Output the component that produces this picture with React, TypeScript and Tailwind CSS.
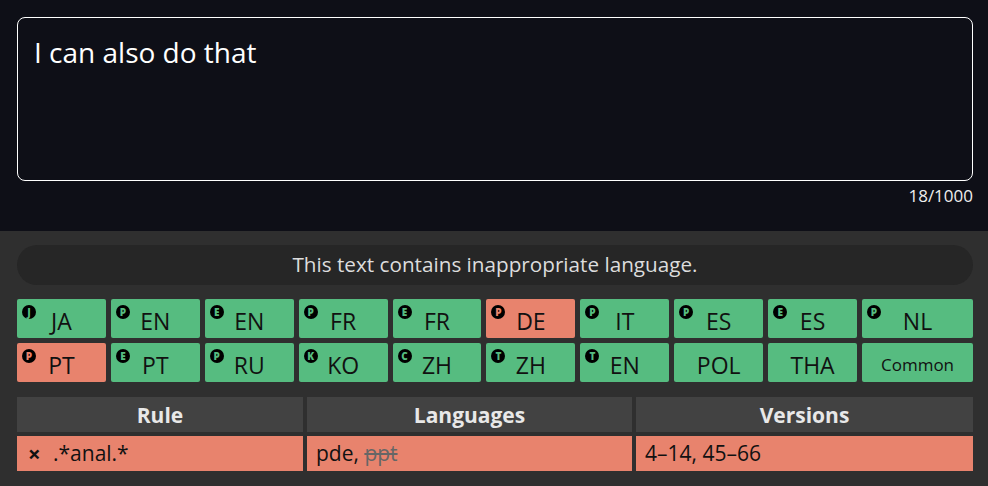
import React from "react";

type Cell = { badge?: string; label: string; bad?: boolean; small?: boolean };

const ROW1: Cell[] = [
  { badge: "J", label: "JA" },
  { badge: "P", label: "EN" },
  { badge: "E", label: "EN" },
  { badge: "P", label: "FR" },
  { badge: "E", label: "FR" },
  { badge: "P", label: "DE", bad: true },
  { badge: "P", label: "IT" },
  { badge: "P", label: "ES" },
  { badge: "E", label: "ES" },
  { badge: "P", label: "NL" },
];

const ROW2: Cell[] = [
  { badge: "P", label: "PT", bad: true },
  { badge: "E", label: "PT" },
  { badge: "P", label: "RU" },
  { badge: "K", label: "KO" },
  { badge: "C", label: "ZH" },
  { badge: "T", label: "ZH" },
  { badge: "T", label: "EN" },
  { label: "POL" },
  { label: "THA" },
  { label: "Common", small: true },
];

function LangCell({ cell }: { cell: Cell }) {
  const bg = cell.bad ? "bg-[#e8836d]" : "bg-[#56bc80]";
  const fg = cell.bad ? "text-[#e8836d]" : "text-[#56bc80]";
  return (
    <div className={`relative flex items-center justify-center h-[39px] rounded-[2px] ${bg}`}>
      {cell.badge && (
        <span
          className={`absolute left-[5px] top-[6px] flex items-center justify-center w-[14px] h-[14px] rounded-full bg-black text-[10px] font-extrabold leading-none ${fg}`}
        >
          {cell.badge}
        </span>
      )}
      <span className={`pt-[5px] text-[#111] ${cell.small ? "text-[17px]" : "text-[23px]"}`}>
        {cell.label}
      </span>
    </div>
  );
}

export default function App() {
  return (
    <div
      className="w-[988px] h-[486px] overflow-hidden flex flex-col"
      style={{ fontFamily: '"Open Sans", "Noto Sans", sans-serif' }}
    >
      {/* Input */}
      <div className="bg-[#0e0f17] h-[231px] pl-[17px] pr-[15px] pt-[17px] flex flex-col">
        <div className="h-[164px] rounded-[8px] border border-white px-[16px] pt-[15px] text-[28px] leading-[38px] text-white">
          I can also do that
        </div>
        <div className="text-right text-[17px] text-[#eee] mt-[2px]">18/1000</div>
      </div>

      {/* Result */}
      <div className="bg-[#2f2f2f] flex-1 pl-[17px] pr-[15px] pt-[14px] flex flex-col">
        <div className="h-[40px] rounded-full bg-[#262626] flex items-center justify-center text-[20.7px] text-[#ddd]">
          This text contains inappropriate language.
        </div>

        <div className="mt-[14px] grid grid-cols-[repeat(9,88.9px)_1fr] gap-x-[5px] gap-y-[5px]">
          {ROW1.map((c, i) => (
            <LangCell key={"a" + i} cell={c} />
          ))}
          {ROW2.map((c, i) => (
            <LangCell key={"b" + i} cell={c} />
          ))}
        </div>

        <div className="mt-[15px] grid grid-cols-[286px_325px_1fr] gap-x-[4px] gap-y-[4px]">
          <div className="h-[35px] bg-[#424242] flex items-center justify-center pt-[2px] font-bold text-[21px] text-[#e8e8e8]">
            Rule
          </div>
          <div className="h-[35px] bg-[#424242] flex items-center justify-center pt-[2px] font-bold text-[21px] text-[#e8e8e8]">
            Languages
          </div>
          <div className="h-[35px] bg-[#424242] flex items-center justify-center pt-[2px] font-bold text-[21px] text-[#e8e8e8]">
            Versions
          </div>
          <div className="h-[35px] bg-[#e8836d] flex items-center pl-[11px] text-[21px] text-[#111]">
            <span className="font-bold text-[22px] w-[25px]">×</span>
            <span>.*anal.*</span>
          </div>
          <div className="h-[35px] bg-[#e8836d] flex items-center pl-[9px] text-[21px] text-[#111]">
            pde,&nbsp;<span className="line-through text-[#666]">ppt</span>
          </div>
          <div className="h-[35px] bg-[#e8836d] flex items-center pl-[9px] text-[21px] text-[#111]">
            4–14, 45–66
          </div>
        </div>
      </div>
    </div>
  );
}
